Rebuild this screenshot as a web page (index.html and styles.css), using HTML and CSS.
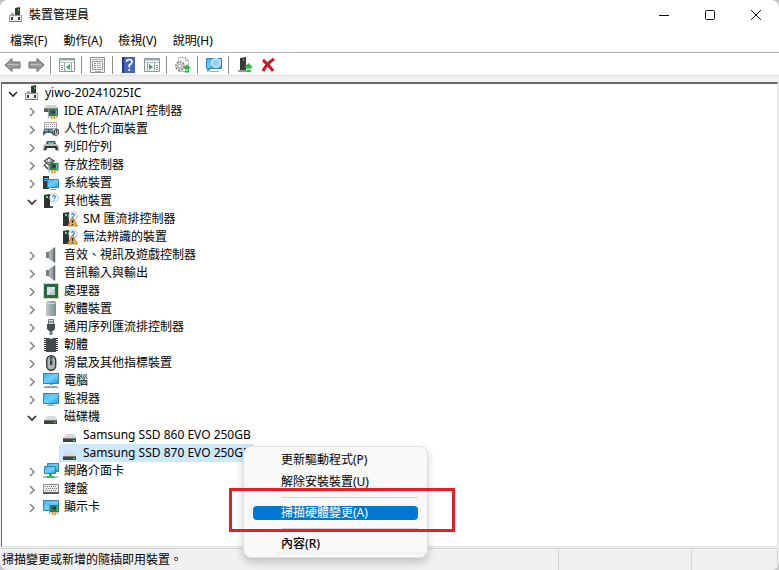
FILE: index.html
```html
<!DOCTYPE html>
<html lang="zh-Hant">
  <head>
    <meta charset="UTF-8" />
    <meta name="viewport" content="width=device-width, initial-scale=1.0" />
    <title>裝置管理員</title>
    <link rel="stylesheet" href="styles.css">
  </head>

  <body>
    <!-- icons -->
    <svg class="defs" width="0" height="0">
      <linearGradient id="blue" x1="0" y1="0" x2="1" y2="1">
        <stop offset="0" stop-color="#35b5f5" /><stop offset="0.5" stop-color="#6fd0ff" /><stop offset="1" stop-color="#1c9be6" />
      </linearGradient>
      <linearGradient id="gray" x1="0" y1="0" x2="1" y2="0">
        <stop offset="0" stop-color="#c3c7ca" /><stop offset="1" stop-color="#83898d" />
      </linearGradient>
      <symbol id="right" viewBox="0 0 10 10"><path d="M3 1l4 4-4 4" fill="none" stroke="#858585" stroke-width="1.5" /></symbol>
      <symbol id="down" viewBox="0 0 10 10"><path d="M1 3l4 4 4-4" fill="none" stroke="#2b2b2b" stroke-width="1.6" /></symbol>
      <symbol id="pc" viewBox="0 0 16 16">
        <path d="M7 1l5-1v9H7z" fill="#33383a" /><path d="M10 2h1v2h-1z" fill="#4dd25a" />
        <path d="M3 6h3v3H3z" fill="#a4a8aa" />
        <path d="M1.5 8.5h12v6h-12z" fill="#f0f0f0" stroke="#9a9ea0" /><path d="M1 14.5h13" stroke="#777" />
        <path d="M3 10h2v3H3zM10 10h2v3h-2z" fill="#3c4144" />
      </symbol>
      <symbol id="card" viewBox="0 0 12 12">
        <path d="M2 1h10v8H2z" fill="#278058" /><path d="M5 3h4v3H5z" fill="#303437" /><path d="M10 2v6" stroke="#8cc8a8" />
        <path d="M1.5 0v11" stroke="#8f9496" />
        <path d="M4 9h2v3H4zM7 9h2v3H7zM10 9h1v2h-1z" fill="#e89522" />
      </symbol>
      <symbol id="ide" viewBox="0 0 16 16">
        <path d="M3 2h10l2 3H1z" fill="#d0d3d4" /><path d="M1 5h14v4H1z" fill="#55595b" /><path d="M1 5.5h14" stroke="#8b8f91" />
        <use href="#card" x="4" y="5" width="11" height="11" />
      </symbol>
      <symbol id="hid" viewBox="0 0 16 16">
        <path d="M1.5 1.500h12v6h-12z" fill="#f3f3f3" stroke="#aaa" /><path d="M3 3.500h10M3 5.500h10" stroke="#999" stroke-dasharray="1 1" />
        <path d="M0 15c0-6 1-8 4-7h3c3-1 4 1 4 7l-3-3H3z" fill="#515a61" /><circle cx="3.500" cy="9.500" r="1.600" fill="#45a6e5" /><circle cx="8" cy="9.500" r="1.600" fill="#45a6e5" />
        <path d="M11.500 14V9q2-2 4 0v4q-2 3-4 1z" fill="#b8bcbe" stroke="#45494b" /><path d="M13.500 8v4" stroke="#45494b" />
      </symbol>
      <symbol id="printer" viewBox="0 0 16 16">
        <path d="M4 2h8l1 3H3z" fill="#4c5356" /><path d="M5 3h6v2H5z" fill="#5dbfae" />
        <path d="M2 5h12l2 2v5H0V7z" fill="#b9bdbf" /><path d="M2 7h12l1 4H1z" fill="#303436" /><path d="M4 9h8l1 3H3z" fill="#fff" />
      </symbol>
      <symbol id="storage" viewBox="0 0 16 16">
        <path d="M6 .8L11 4 6 8 1.500 4z" fill="#f4f4f4" stroke="#3d4244" stroke-width="1.300" /><path d="M4 4l3 2M8 3v3" stroke="#3d4244" />
        <path d="M1 8l4 4" stroke="#3d4244" stroke-width="1.500" /><path d="M1 8l3-2" stroke="#3d4244" /><use href="#card" x="4" y="5" width="12" height="11" />
      </symbol>
      <symbol id="system" viewBox="0 0 16 16">
        <path d="M0 1h6v13H0z" fill="#33393c" /><path d="M1 3.500h4M1 5.500h3" stroke="#5bbce9" />
        <path d="M4.500 4.500h11v8h-11z" fill="url(#blue)" stroke="#3a88b8" /><path d="M7 14.500h6" stroke="#8ca0aa" />
      </symbol>
      <symbol id="other" viewBox="0 0 16 16">
        <path d="M1 2l6-1v14H1z" fill="#2d3235" /><path d="M3 3h2v2H3z" fill="#53ea53" /><path d="M7 13h3v2H7z" fill="#555" />
        <circle cx="11" cy="5" r="4.200" fill="#fff" stroke="#b9c1c7" />
        <path d="M9.600 4q.1-1.400 1.400-1.400T12.400 4q0 .8-1.400 1.500v.7M11 7v1" fill="none" stroke="#1683dc" stroke-width="1.100" />
      </symbol>
      <symbol id="unknown" viewBox="0 0 16 16">
        <use href="#other" width="16" height="16" />
        <path d="M10.500 6l5 9h-10z" fill="#f9b233" stroke="#a96b12" stroke-width=".8" /><path d="M10.500 9v3M10.500 13v1" stroke="#222" stroke-width="1.300" />
      </symbol>
      <symbol id="sound" viewBox="0 0 16 16">
        <path d="M3 5h3v6H3z" fill="#777c80" /><path d="M6 5l5-4v14l-5-4z" fill="url(#gray)" stroke="#80868a" stroke-width=".7" /><path d="M11.500.5v15" stroke="#5c6164" stroke-width="1.400" />
      </symbol>
      <symbol id="cpu" viewBox="0 0 16 16">
        <path d="M.5.5h15v15H.5z" fill="none" stroke="#c5ac4a" stroke-dasharray="1 1" /><path d="M1 1h14v14H1z" fill="#216b4c" />
        <path d="M4 4h8v8H4z" fill="#dfe2e1" /><path d="M12 5v7H5z" fill="#c2c7c5" />
      </symbol>
      <symbol id="software" viewBox="0 0 16 16">
        <path d="M4 0h8l1 2v13H3V2z" fill="url(#gray)" /><path d="M4 2.500h8" stroke="#d2d5d6" /><circle cx="8" cy="6" r="1.500" fill="#33d7d4" />
      </symbol>
      <symbol id="usb" viewBox="0 0 16 16">
        <path d="M5.500.5h5v5h-5z" fill="#ddd" stroke="#777" /><path d="M7 2v2M9 2v2" stroke="#555" />
        <path d="M4 5h8v5l-2 2H6l-2-2z" fill="#484c4f" /><path d="M6.500 12h3v4h-3z" fill="#71777a" />
      </symbol>
      <symbol id="firmware" viewBox="0 0 16 16">
        <path d="M2.500 1v14M13.500 1v14" stroke="#222" stroke-width="3" stroke-dasharray="1 1" /><path d="M3 1h3q2 2 4 0h3v14H3z" fill="#45494b" />
      </symbol>
      <symbol id="mouse" viewBox="0 0 16 16">
        <rect x="3.700" y=".7" width="9" height="14.600" rx="4.500" fill="#aeb4b7" stroke="#313538" stroke-width="1.400" />
        <path d="M8.200 2v8" stroke="#373d40" stroke-width="2.400" /><path d="M8.200 3v3" stroke="#5c9ac1" />
      </symbol>
      <symbol id="monitor" viewBox="0 0 16 16">
        <path d="M.5 2.500h15v10H.5z" fill="url(#blue)" stroke="#3980ab" /><path d="M6 13h4v1H6z" fill="#a1b0b8" /><path d="M4 14.500h8" stroke="#a1b0b8" />
      </symbol>
      <symbol id="computer" viewBox="0 0 16 16">
        <path d="M.5.5h15v10H.5z" fill="url(#blue)" stroke="#3980ab" /><path d="M6 11h4v1H6z" fill="#a1b0b8" /><path d="M1 14.500l1-1h12l1 1z" fill="#eee" stroke="#91a0a8" />
      </symbol>
      <symbol id="disk" viewBox="0 0 16 16">
        <path d="M4 7h8l3 4H1z" fill="#d7d9da" /><path d="M1 11h13v4H1z" fill="#3f4345" /><path d="M1 11.500h13" stroke="#777" /><path d="M11 13h2v1h-2z" fill="#42ea63" />
      </symbol>
      <symbol id="network" viewBox="0 0 16 16">
        <path d="M4.500.5h11v8h-11z" fill="url(#blue)" stroke="#3980ab" /><path d="M1.500 3.500h11v7h-11z" fill="url(#blue)" stroke="#3980ab" />
        <path d="M0 13h15v2H0z" fill="#b9bfc2" /><path d="M6 11h3v2h2v2H4v-2h2z" fill="#34b84a" />
      </symbol>
      <symbol id="keyboard" viewBox="0 0 16 16">
        <path d="M.5 3.500h15v9H.5z" fill="#eee" stroke="#888" /><path d="M2 5.500h12M3 7.500h11M2 9.500h12" stroke="#777" stroke-dasharray="1 1" /><path d="M0 12h16" stroke="#5a5e60" stroke-width="2" />
      </symbol>
      <symbol id="display" viewBox="0 0 16 16">
        <path d="M.5 1.500h15v10H.5z" fill="url(#blue)" stroke="#3980ab" /><use href="#card" x="5" y="5" width="11" height="11" />
      </symbol>
      <symbol id="arrow" viewBox="0 0 18 16">
        <path d="M1 8l7-6.500v3.500h8v6H8v3.500z" fill="#9b9b9b" stroke="#6d6d6d" /><path d="M4 7.500h11" stroke="#bcbcbc" />
      </symbol>
      <symbol id="panel" viewBox="0 0 18 16">
        <path d="M1.500 1.500h15v13h-15z" fill="#fff" stroke="#8c969d" /><path d="M2 2.500h14" stroke="#9ba4aa" stroke-width="2" /><path d="M2 5.500h14" stroke="#b3bbc0" />
      </symbol>
      <symbol id="uparrow" viewBox="0 0 8 8"><path d="M4 0l4 4H6v1H2V4H0zM2 6h4v2H2z" fill="#28b441" /></symbol>
    </svg>

    <div class="window">
      <header class="titlebar">
        <svg class="icon"><use href="#pc" /></svg>
        <h1>裝置管理員</h1>
        <button class="ctrl" aria-label="最小化"><svg viewBox="0 0 12 12"><path d="M1 6.500h10" /></svg></button>
        <button class="ctrl" aria-label="最大化"><svg viewBox="0 0 12 12"><rect x="1.500" y="1.500" width="9" height="9" rx="1" /></svg></button>
        <button class="ctrl" aria-label="關閉"><svg viewBox="0 0 12 12"><path d="M1 1l10 10M11 1L1 11" /></svg></button>
      </header>

      <nav class="menubar">
        <button>檔案(F)</button>
        <button>動作(A)</button>
        <button>檢視(V)</button>
        <button>說明(H)</button>
      </nav>

      <div class="toolbar">
        <button aria-label="上一頁"><svg viewBox="0 0 18 16"><use href="#arrow" /></svg></button>
        <button aria-label="下一頁"><svg class="flip" viewBox="0 0 18 16"><use href="#arrow" /></svg></button>
        <span class="sep"></span>
        <button aria-label="顯示主控台樹"><svg viewBox="0 0 18 16"><use href="#panel" /><path d="M6.500 6v8M13.500 6v8" stroke="#9aa4aa" /><path d="M3 8.500h2M3 10.500h2M3 12.500h2" stroke="#6f90a8" /><path d="M12 7v6L8 10z" fill="#28b441" /></svg></button>
        <span class="sep"></span>
        <button aria-label="內容"><svg viewBox="0 0 18 16"><path d="M1.500.5h14v15h-14z" fill="#f4f4f4" stroke="#8f8f8f" /><path d="M3.500 4.500h10v8h-10z" fill="#fff" stroke="#999" /><path d="M3 2.500h11M8 6.500h4M8 8.500h4M8 10.500h4M6 14.500h6" stroke="#aaa" /><path d="M5 6.500h2M5 8.500h2M5 10.500h2" stroke="#3b8dc4" /></svg></button>
        <span class="sep"></span>
        <button aria-label="說明"><svg viewBox="0 0 18 16"><path d="M2 0h13v16H2z" fill="#4464c0" /><path d="M2 0h2v16H2z" fill="#223b88" /><path d="M6.500 5q0-2.500 2.700-2.500T12 5q0 1.500-2.700 3v2.500M9.300 12v2" fill="none" stroke="#fff" stroke-width="1.700" /></svg></button>
        <button aria-label="顯示動作窗格"><svg viewBox="0 0 18 16"><use href="#panel" /><path d="M4.500 6v8M11.500 6v8" stroke="#9aa4aa" /><path d="M13 8.500h2M13 10.500h2M13 12.500h2" stroke="#3b8dc4" /><path d="M6 7v6l4-3z" fill="#28b441" /></svg></button>
        <span class="sep"></span>
        <button aria-label="更新驅動程式"><svg viewBox="0 0 18 16"><path d="M4.500.5h7l3 3v11h-10z" fill="#f7f7f7" stroke="#b8b8b8" /><path d="M11.500.5v3h3" fill="none" stroke="#b8b8b8" /><circle cx="6" cy="9" r="4" fill="#eee" stroke="#8d8d8d" stroke-width="2" stroke-dasharray="2 1" /><circle cx="6" cy="9" r="2" fill="#fff" stroke="#999" /><use href="#uparrow" x="9" y="7" width="8" height="9" /></svg></button>
        <span class="sep"></span>
        <button aria-label="掃描硬體變更"><svg viewBox="0 0 18 16"><path d="M1.500 1.500h15v10h-15z" fill="url(#blue)" stroke="#3980ab" /><path d="M4 14h10v1H4z" fill="#9fb0ba" /><path d="M8 9l-6 5" stroke="#5f8eac" stroke-width="2" /><circle cx="11" cy="6" r="4.300" fill="#8bd4f8" stroke="#d9e5ec" stroke-width="1.400" /></svg></button>
        <span class="sep"></span>
        <button aria-label="新增驅動程式"><svg viewBox="0 0 18 16"><path d="M4 1l6-1v14H4z" fill="#33383a" /><path d="M7 2h1v2H7z" fill="#4dd25a" /><path d="M2 13h8v2H2z" fill="#999" /><use href="#uparrow" x="8" y="6" width="9" height="9" /></svg></button>
        <button aria-label="解除安裝裝置"><svg viewBox="0 0 18 16"><path d="M4 3q5 4 10 11M15 2Q8 6 4 14" fill="none" stroke="#d70f1e" stroke-width="3" /></svg></button>
      </div>

      <main class="tree">
        <ul>
          <li>
            <div class="row"><button class="toggle" aria-label="收合"><svg><use href="#down" /></svg></button><span class="label"><svg class="icon"><use href="#pc" /></svg>yiwo-20241025IC</span></div>
            <ul>
              <li class="row"><button class="toggle" aria-label="展開"><svg><use href="#right" /></svg></button><span class="label"><svg class="icon"><use href="#ide" /></svg>IDE ATA/ATAPI 控制器</span></li>
              <li class="row"><button class="toggle" aria-label="展開"><svg><use href="#right" /></svg></button><span class="label"><svg class="icon"><use href="#hid" /></svg>人性化介面裝置</span></li>
              <li class="row"><button class="toggle" aria-label="展開"><svg><use href="#right" /></svg></button><span class="label"><svg class="icon"><use href="#printer" /></svg>列印佇列</span></li>
              <li class="row"><button class="toggle" aria-label="展開"><svg><use href="#right" /></svg></button><span class="label"><svg class="icon"><use href="#storage" /></svg>存放控制器</span></li>
              <li class="row"><button class="toggle" aria-label="展開"><svg><use href="#right" /></svg></button><span class="label"><svg class="icon"><use href="#system" /></svg>系統裝置</span></li>
              <li>
                <div class="row"><button class="toggle" aria-label="收合"><svg><use href="#down" /></svg></button><span class="label"><svg class="icon"><use href="#other" /></svg>其他裝置</span></div>
                <ul>
                  <li class="row leaf"><span class="label"><svg class="icon"><use href="#unknown" /></svg>SM 匯流排控制器</span></li>
                  <li class="row leaf"><span class="label"><svg class="icon"><use href="#unknown" /></svg>無法辨識的裝置</span></li>
                </ul>
              </li>
              <li class="row"><button class="toggle" aria-label="展開"><svg><use href="#right" /></svg></button><span class="label"><svg class="icon"><use href="#sound" /></svg>音效、視訊及遊戲控制器</span></li>
              <li class="row"><button class="toggle" aria-label="展開"><svg><use href="#right" /></svg></button><span class="label"><svg class="icon"><use href="#sound" /></svg>音訊輸入與輸出</span></li>
              <li class="row"><button class="toggle" aria-label="展開"><svg><use href="#right" /></svg></button><span class="label"><svg class="icon"><use href="#cpu" /></svg>處理器</span></li>
              <li class="row"><button class="toggle" aria-label="展開"><svg><use href="#right" /></svg></button><span class="label"><svg class="icon"><use href="#software" /></svg>軟體裝置</span></li>
              <li class="row"><button class="toggle" aria-label="展開"><svg><use href="#right" /></svg></button><span class="label"><svg class="icon"><use href="#usb" /></svg>通用序列匯流排控制器</span></li>
              <li class="row"><button class="toggle" aria-label="展開"><svg><use href="#right" /></svg></button><span class="label"><svg class="icon"><use href="#firmware" /></svg>韌體</span></li>
              <li class="row"><button class="toggle" aria-label="展開"><svg><use href="#right" /></svg></button><span class="label"><svg class="icon"><use href="#mouse" /></svg>滑鼠及其他指標裝置</span></li>
              <li class="row"><button class="toggle" aria-label="展開"><svg><use href="#right" /></svg></button><span class="label"><svg class="icon"><use href="#computer" /></svg>電腦</span></li>
              <li class="row"><button class="toggle" aria-label="展開"><svg><use href="#right" /></svg></button><span class="label"><svg class="icon"><use href="#monitor" /></svg>監視器</span></li>
              <li>
                <div class="row"><button class="toggle" aria-label="收合"><svg><use href="#down" /></svg></button><span class="label"><svg class="icon"><use href="#disk" /></svg>磁碟機</span></div>
                <ul>
                  <li class="row leaf"><span class="label"><svg class="icon"><use href="#disk" /></svg>Samsung SSD 860 EVO 250GB</span></li>
                  <li class="row leaf">
                    <span class="label selected"><svg class="icon"><use href="#disk" /></svg>Samsung SSD 870 EVO 250GB</span>
                    <div class="popup">
                      <button>更新驅動程式(P)</button>
                      <button>解除安裝裝置(U)</button>
                      <hr>
                      <button class="current">掃描硬體變更(A)</button>
                      <hr>
                      <button class="default">內容(R)</button>
                      <div class="mark"></div>
                    </div>
                  </li>
                </ul>
              </li>
              <li class="row"><button class="toggle" aria-label="展開"><svg><use href="#right" /></svg></button><span class="label"><svg class="icon"><use href="#network" /></svg>網路介面卡</span></li>
              <li class="row"><button class="toggle" aria-label="展開"><svg><use href="#right" /></svg></button><span class="label"><svg class="icon"><use href="#keyboard" /></svg>鍵盤</span></li>
              <li class="row"><button class="toggle" aria-label="展開"><svg><use href="#right" /></svg></button><span class="label"><svg class="icon"><use href="#display" /></svg>顯示卡</span></li>
            </ul>
          </li>
        </ul>
      </main>

      <footer class="statusbar">
        <span class="msg">掃描變更或新增的隨插即用裝置。</span>
        <span class="cell"></span>
        <span class="cell small"></span>
      </footer>
    </div>
  </body>
</html>
```
FILE: styles.css
```css
* {
  box-sizing: border-box;
}
body {
  margin: 0;
  background-color: #c4c4c6;
  font: 12px/18px "Noto Sans", "Noto Sans CJK TC", sans-serif;
  color: #000;
}
button {
  border: 0;
  padding: 0;
  background: none;
  font: inherit;
  color: inherit;
}
ul {
  list-style: none;
  margin: 0;
  padding: 0;
}
.defs {
  position: absolute;
}
.icon {
  width: 16px;
  height: 16px;
  flex: none;
}

.window {
  display: flex;
  flex-direction: column;
  min-height: 100vh;
  border-radius: 8px;
  background-color: #f0f0f0;
}

/* title */
.titlebar {
  display: flex;
  align-items: center;
  height: 29px;
  padding-left: 8px;
  border-radius: 8px 8px 0 0;
  background-color: #fff;
}
.titlebar h1 {
  flex: 1;
  margin: 0 0 0 5px;
  font-size: 12px;
  font-weight: normal;
}
.ctrl {
  width: 46px;
  height: 29px;
}
.ctrl svg {
  width: 12px;
  height: 12px;
  display: block;
  margin: 0 auto;
  fill: none;
  stroke: #111;
}

.menubar {
  display: flex;
  gap: 16px;
  height: 24px;
  padding: 0 10px;
  background-color: #fff;
  border-bottom: 1px solid #b0b0b0;
}

.toolbar {
  display: flex;
  align-items: center;
  height: 23px;
  padding: 2px 0 0 1px;
  background-color: #fff;
  border-bottom: 1px solid #dcdcdc;
}
.toolbar button {
  width: 23px;
  height: 16px;
}
.toolbar svg {
  display: block;
  width: 18px;
  height: 16px;
  margin: 0 auto;
}
.toolbar .flip {
  transform: scaleX(-1);
}
.toolbar .sep {
  width: 1px;
  height: 18px;
  margin: 0 4px 0 3px;
  background-color: #8c8c8c;
}

/* device tree */
.tree {
  flex: 1;
  margin: 6px 1px 1px;
  border: 1px solid #e3e3e3;
  border-top: 2px solid #696969;
  border-left: 1px solid #696969;
  padding-left: 1px;
  background-color: #fff;
}
.tree ul ul {
  padding-left: 19px;
}
.row {
  display: flex;
  position: relative;
  height: 18px;
}
.toggle {
  width: 18px;
  height: 18px;
  padding: 2px 0 0 1px;
}
.toggle svg {
  display: block;
  width: 10px;
  height: 10px;
  margin: 0 auto;
}
.leaf {
  padding-left: 18px;
}
.label {
  display: flex;
  align-items: center;
  gap: 5px;
  padding: 0 3px;
  white-space: nowrap;
}
.selected {
  background-color: #cce8ff;
  border-radius: 2px;
}

/* context menu */
.popup {
  position: absolute;
  left: 202px;
  top: 2px;
  width: 185px;
  padding: 2px 9px;
  border: 1px solid #dedede;
  border-radius: 8px;
  background-color: #f9f9f9;
  box-shadow: 0 4px 8px rgba(0, 0, 0, 0.2);
}
.popup::after {
  content: "";
  display: block;
  height: 3px;
  margin: -3px -7px 0 24px;
  background-color: #f2f2f2;
}
.popup button {
  display: block;
  width: 100%;
  height: 22px;
  padding-left: 28px;
  text-align: left;
}
.popup hr {
  margin: 4px 0 8px 29px;
  border: 0;
  border-top: 1px solid #d5d5d5;
}
.popup .current {
  height: 14px;
  line-height: 14px;
  border-radius: 4px;
  background-color: #0078d4;
  color: #fff;
}
.popup .current + hr {
  margin: 8px 0 4px 29px;
}
.popup .default {
  font-weight: 500;
}
.mark {
  position: absolute;
  left: -15px;
  right: -28px;
  top: 41px;
  height: 44px;
  border: 3px solid #ed1c24;
}

.statusbar {
  display: flex;
  height: 22px;
  border-top: 1px solid #d4d4d4;
  border-radius: 0 0 8px 8px;
}
.statusbar .msg {
  flex: 1;
  padding-left: 2px;
  line-height: 22px;
}
.statusbar .cell {
  width: 133px;
  margin-top: 1px;
  border-left: 1px solid #d4d4d4;
}
.statusbar .small {
  width: 87px;
  margin-right: 1px;
  border-right: 1px solid #d4d4d4;
}
```
